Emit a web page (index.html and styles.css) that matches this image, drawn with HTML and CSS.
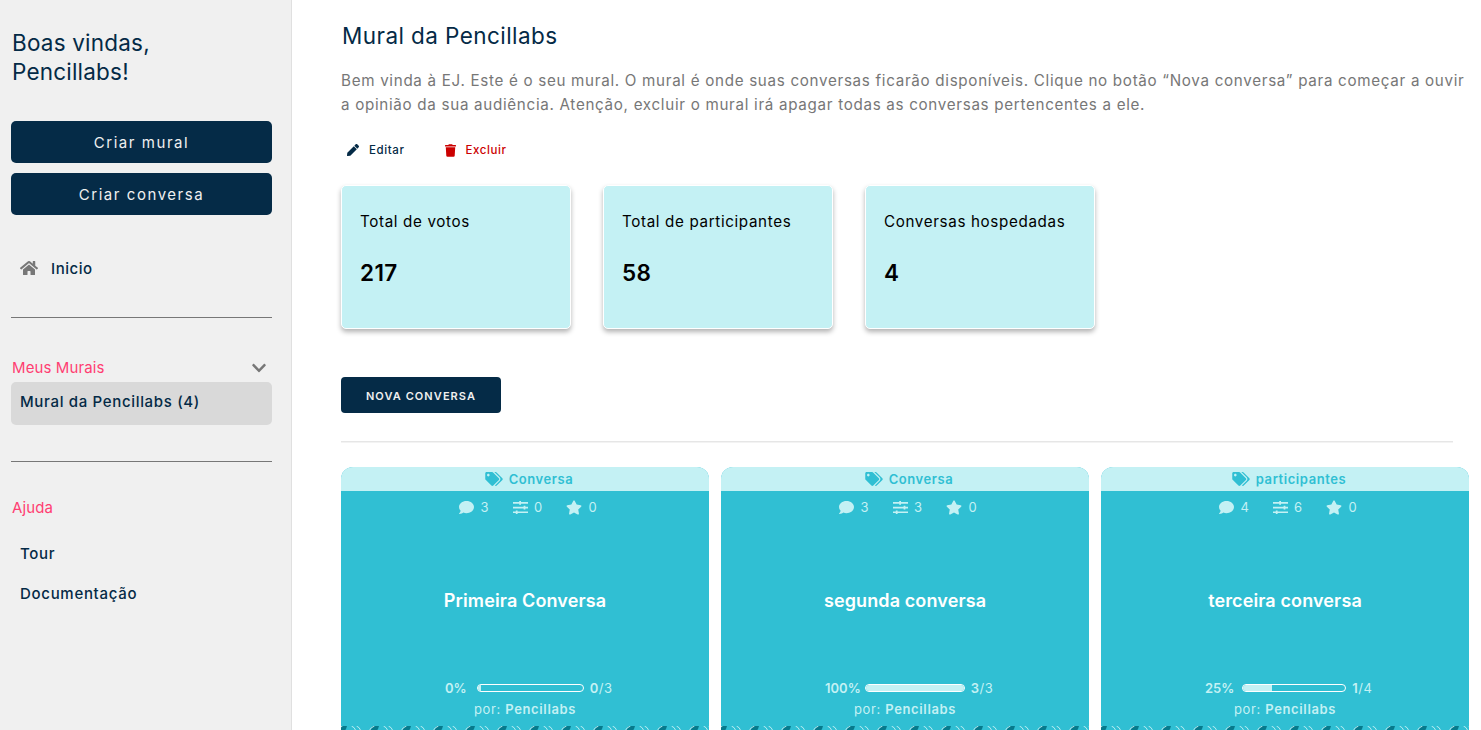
FILE: index.html
```html
<!DOCTYPE html>
<html lang="pt-BR">
<head>
<meta charset="utf-8">
<title>Mural da Pencillabs</title>
<link rel="stylesheet" href="styles.css">
</head>
<body>
<svg class="sprite" aria-hidden="true">
  <symbol id="home" viewBox="0 0 576 512"><path d="M280.37 148.26L96 300.11V464a16 16 0 0 0 16 16l112.06-.29a16 16 0 0 0 15.92-16V368a16 16 0 0 1 16-16h64a16 16 0 0 1 16 16v95.64a16 16 0 0 0 16 16.05L464 480a16 16 0 0 0 16-16V300L295.67 148.26a12.19 12.19 0 0 0-15.3 0zM571.6 251.47L488 182.56V44.05a12 12 0 0 0-12-12h-56a12 12 0 0 0-12 12v72.61L318.47 43a48 48 0 0 0-61 0L4.34 251.47a12 12 0 0 0-1.6 16.9l25.5 31A12 12 0 0 0 45.15 301l235.22-193.74a12.19 12.19 0 0 1 15.3 0L530.9 301a12 12 0 0 0 16.9-1.6l25.5-31a12 12 0 0 0-1.7-16.93z"/></symbol>
  <symbol id="chevron" viewBox="0 0 448 512"><path d="M207.029 381.476L12.686 187.132c-9.373-9.373-9.373-24.569 0-33.941l22.667-22.667c9.357-9.357 24.522-9.375 33.901-.04L224 284.505l154.745-154.021c9.379-9.335 24.544-9.317 33.901.04l22.667 22.667c9.373 9.373 9.373 24.569 0 33.941L240.971 381.476c-9.373 9.372-24.569 9.372-33.942 0z"/></symbol>
  <symbol id="pen" viewBox="0 0 512 512"><path d="M290.74 93.24l128.02 128.02-277.99 277.99-114.14 12.6C11.35 513.54-1.56 500.62.14 485.34l12.7-114.22 277.9-277.88zm207.2-19.06l-60.11-60.11c-18.75-18.75-49.16-18.75-67.91 0l-56.55 56.55 128.02 128.02 56.55-56.55c18.75-18.76 18.75-49.16 0-67.91z"/></symbol>
  <symbol id="trash" viewBox="0 0 448 512"><path d="M432 32H312l-9.4-18.7A24 24 0 0 0 281.1 0H166.8a23.72 23.72 0 0 0-21.4 13.3L136 32H16A16 16 0 0 0 0 48v32a16 16 0 0 0 16 16h416a16 16 0 0 0 16-16V48a16 16 0 0 0-16-16zM53.2 467a48 48 0 0 0 47.9 45h245.8a48 48 0 0 0 47.9-45L416 128H32z"/></symbol>
  <symbol id="tags" viewBox="0 0 640 512"><path d="M497.941 225.941L286.059 14.059A48 48 0 0 0 252.118 0H48C21.49 0 0 21.49 0 48v204.118a48 48 0 0 0 14.059 33.941l211.882 211.882c18.744 18.745 49.136 18.746 67.882 0l204.118-204.118c18.745-18.745 18.745-49.137 0-67.882zM112 160c-26.51 0-48-21.49-48-48s21.49-48 48-48 48 21.49 48 48-21.49 48-48 48zm513.941 133.823L421.823 497.941c-18.745 18.745-49.137 18.745-67.882 0l-.36-.36L527.64 323.522c16.999-16.999 26.36-39.6 26.36-63.64s-9.362-46.641-26.36-63.64L331.397 0h48.721a48 48 0 0 1 33.941 14.059l211.882 211.882c18.745 18.745 18.745 49.137 0 67.882z"/></symbol>
  <symbol id="comment" viewBox="0 0 512 512"><path d="M256 32C114.6 32 0 125.1 0 240c0 49.6 21.4 95 57 130.7C44.5 421.1 2.7 466 2.2 466.5c-2.2 2.3-2.8 5.7-1.5 8.7S4.8 480 8 480c66.3 0 116-31.8 140.6-51.4 32.7 12.3 69 19.4 107.4 19.4 141.4 0 256-93.1 256-208S397.4 32 256 32z"/></symbol>
  <symbol id="sliders" viewBox="0 0 15 15"><path d="M0 2h15v1.7H0zM0 6.7h15v1.7H0zM0 11.4h15v1.7H0zM6.2 1h1.8v3.7H6.2zM10.6 5.7h1.8v3.7h-1.8zM2.8 10.4h1.8v3.7H2.8z"/></symbol>
  <symbol id="star" viewBox="0 0 576 512"><path d="M259.3 17.8L194 150.2 47.9 171.5c-26.2 3.8-36.7 36.1-17.7 54.6l105.7 103-25 145.5c-4.5 26.3 23.2 46 46.4 33.7L288 439.6l130.7 68.7c23.2 12.2 50.9-7.4 46.4-33.7l-25-145.5 105.7-103c19-18.5 8.5-50.8-17.7-54.6L382 150.2 316.7 17.8c-11.7-23.6-45.6-23.9-57.4 0z"/></symbol>
  <pattern id="wave" width="32" height="22" patternUnits="userSpaceOnUse">
    <path class="wave-dark" d="M0 0H6Q5.5 3 3.5 5H0zM32 0v5h-3Q30 2 32 0z"/>
    <path class="wave-line" d="M28 5Q29.5 1.5 33.5 0M10.5 0Q13.5 1 15 5M15.5 0Q18.5 1 20 5M-4 5Q-2.5 1.5 1.5 0"/>
  </pattern>
</svg>
<div class="app">
  <aside class="side">
    <h2 class="welcome"><span>Boas vindas,</span><br><span>Pencillabs!</span></h2>
    <a class="side-btn"><span>Criar mural</span></a>
    <a class="side-btn"><span>Criar conversa</span></a>
    <a class="home"><svg class="i-home"><use href="#home"/></svg><span>Inicio</span></a>
    <div class="rule"></div>
    <div class="group"><span>Meus Murais</span><svg class="i-chevron"><use href="#chevron"/></svg></div>
    <a class="current"><span>Mural da Pencillabs (4)</span></a>
    <div class="rule"></div>
    <div class="help"><span>Ajuda</span></div>
    <a class="link"><span>Tour</span></a>
    <a class="link"><span>Documentação</span></a>
  </aside>
  <main class="main">
    <h1 class="title"><span>Mural da Pencillabs</span></h1>
    <p class="intro">Bem vinda à EJ. Este é o seu mural. O mural é onde suas conversas ficarão disponíveis. Clique no botão “Nova conversa” para começar a ouvir<br>a opinião da sua audiência. Atenção, excluir o mural irá apagar todas as conversas pertencentes a ele.</p>
    <div class="actions">
      <a class="edit"><svg class="i-pen"><use href="#pen"/></svg><span>Editar</span></a>
      <a class="delete"><svg class="i-trash"><use href="#trash"/></svg><span>Excluir</span></a>
    </div>
    <div class="totals">
      <div class="total"><span>Total de votos</span><strong>217</strong></div>
      <div class="total"><span>Total de participantes</span><strong>58</strong></div>
      <div class="total"><span>Conversas hospedadas</span><strong>4</strong></div>
    </div>
    <a class="new"><span>NOVA CONVERSA</span></a>
    <div class="divider"></div>
    <div class="cards">
      <article class="card">
        <div class="tag"><svg class="i-tags"><use href="#tags"/></svg><span>Conversa</span></div>
        <div class="stats"><svg class="i-stat"><use href="#comment"/></svg><span>3</span><svg class="i-stat"><use href="#sliders"/></svg><span>0</span><svg class="i-star"><use href="#star"/></svg><span>0</span></div>
        <h3 class="name">Primeira Conversa</h3>
        <div class="progress"><b>0%</b><div class="bar bar-0"><i style="width:3%"></i></div><span><b>0</b>/3</span></div>
        <div class="author"><span>por:</span> <b>Pencillabs</b></div>
        <svg class="waves"><rect width="100%" height="22" fill="url(#wave)"/></svg>
      </article>
      <article class="card">
        <div class="tag"><svg class="i-tags"><use href="#tags"/></svg><span>Conversa</span></div>
        <div class="stats"><svg class="i-stat"><use href="#comment"/></svg><span>3</span><svg class="i-stat"><use href="#sliders"/></svg><span>3</span><svg class="i-star"><use href="#star"/></svg><span>0</span></div>
        <h3 class="name">segunda conversa</h3>
        <div class="progress"><b>100%</b><div class="bar bar-100"><i style="width:100%"></i></div><span><b>3</b>/3</span></div>
        <div class="author"><span>por:</span> <b>Pencillabs</b></div>
        <svg class="waves"><rect width="100%" height="22" fill="url(#wave)"/></svg>
      </article>
      <article class="card">
        <div class="tag"><svg class="i-tags"><use href="#tags"/></svg><span>participantes</span></div>
        <div class="stats"><svg class="i-stat"><use href="#comment"/></svg><span>4</span><svg class="i-stat"><use href="#sliders"/></svg><span>6</span><svg class="i-star"><use href="#star"/></svg><span>0</span></div>
        <h3 class="name">terceira conversa</h3>
        <div class="progress"><b>25%</b><div class="bar bar-25"><i style="width:28%"></i></div><span><b>1</b>/4</span></div>
        <div class="author"><span>por:</span> <b>Pencillabs</b></div>
        <svg class="waves"><rect width="100%" height="22" fill="url(#wave)"/></svg>
      </article>
    </div>
  </main>
</div>
</body>
</html>
```
FILE: styles.css
```css
* { box-sizing: border-box; }
body { margin: 0; font-family: Inter, Roboto, sans-serif; color: #042a46; background: #fff; overflow: hidden; }
h1, h2, h3, p { margin: 0; font-weight: 400; }
svg { display: block; fill: currentColor; flex: none; }
.sprite { position: absolute; width: 0; height: 0; }
.app { display: flex; height: 730px; overflow: hidden; }
.side { width: 292px; flex: none; background: #f0f0f0; border-right: 1px solid #e0e0e0; padding: 28px 19px 0 11px; white-space: nowrap; }
.welcome { font-size: 22.5px; line-height: 29px; letter-spacing: .2px; margin-bottom: 35px; padding-left: 1px; }
.side-btn { display: flex; align-items: center; justify-content: center; height: 42px; margin-bottom: 10px; border-radius: 5px; background: #052b47; color: #f0f0f0; font-size: 15px; letter-spacing: 1.55px; }
.home { display: flex; align-items: center; gap: 13px; height: 24px; margin: 41px 0 37px; padding-left: 9px; font-size: 15px; font-weight: 500; letter-spacing: .55px; }
.i-home { width: 18px; height: 16px; color: #777; }
.rule { height: 1px; background: #777; }
.group { display: flex; align-items: center; justify-content: space-between; height: 24px; margin-top: 37px; padding: 0 5px 0 1px; font-size: 15px; letter-spacing: .1px; color: #ff3e72; }
.i-chevron { width: 16px; height: 16px; margin-top: 2px; color: #777; }
.current { display: block; height: 43px; line-height: 40px; margin: 3px 0 36px; padding-left: 9px; border-radius: 5px; background: #d9d9d9; font-size: 15px; font-weight: 500; letter-spacing: .67px; }
.help { font-size: 15px; line-height: 24px; margin: 34px 0 22px; padding-left: 1px; letter-spacing: .1px; color: #ff3e72; }
.link { display: block; height: 40px; line-height: 24px; padding-left: 9px; font-size: 15px; font-weight: 500; letter-spacing: .7px; }
.main { width: 1189px; padding: 20px 12px 0 49px; white-space: nowrap; }
.title { font-size: 22.5px; line-height: 32px; letter-spacing: .43px; margin-bottom: 17px; padding-left: 1px; }
.intro { font-size: 15.2px; line-height: 24px; letter-spacing: .69px; color: #777; }
.actions { display: flex; align-items: center; gap: 40px; height: 20px; margin: 23px 0 25px; padding-left: 6px; font-size: 11.5px; font-weight: 500; letter-spacing: .6px; }
.edit, .delete { display: flex; align-items: center; gap: 10px; }
.i-pen { width: 12px; height: 12px; }
.i-trash { width: 11px; height: 13px; }
.delete { color: #cb0000; }
.totals { display: flex; gap: 32px; }
.total { width: 230px; height: 144px; padding: 24px 18px; border: 1px solid #fff; border-radius: 5px; background: #c4f1f4; color: #000; box-shadow: 0 3px 5px rgba(0,0,0,.3); display: flex; flex-direction: column; }
.total span { font-size: 15.2px; line-height: 24px; letter-spacing: .64px; }
.total strong { font-size: 22.5px; line-height: 30px; margin-top: 24px; font-weight: 600; letter-spacing: .4px; }
.new { display: flex; align-items: center; justify-content: center; width: 160px; height: 36px; margin: 48px 0 28px; padding-top: 1px; border-radius: 4px; background: #052b47; color: #f0f0f0; font-size: 11px; font-weight: 600; letter-spacing: 1.08px; }
.divider { width: 1112px; height: 2px; border-top: 1px solid #e6e6e6; background: #f3f3f3; margin-bottom: 24px; }
.cards { display: flex; gap: 12px; }
.card { width: 368px; height: 281px; flex: none; border-radius: 12px 12px 0 0; overflow: hidden; background: #30bfd3; color: #c4f1f4; font-size: 13px; }
.tag { display: flex; align-items: center; justify-content: center; gap: 6px; height: 24px; padding-left: 8px; background: #c4f1f4; color: #30bfd3; font-weight: 600; letter-spacing: .57px; }
.i-tags { width: 18px; height: 14px; }
.stats { display: flex; align-items: center; height: 32px; padding-left: 118px; }
.stats span { width: 10px; margin: 0 22px 0 6.5px; }
.i-stat { width: 15px; height: 15px; }
.i-star { width: 16px; height: 15px; }
.name { margin-top: 63px; font-size: 18px; line-height: 30px; letter-spacing: .12px; font-weight: 600; color: #fff; text-align: center; }
.progress { display: flex; align-items: center; height: 20px; margin-top: 62px; padding-left: 104px; }
.progress span { letter-spacing: .5px; }
.progress b, .author b { font-weight: 600; }
.bar { height: 8px; border: 1px solid #fff; border-radius: 4px; overflow: hidden; }
.bar i { display: block; height: 100%; background: #c4f1f4; }
.bar-0 { width: 107px; margin: 0 6px 0 10px; }
.bar-100 { width: 100px; margin: 0 6px 0 4px; }
.bar-25 { width: 104px; margin: 0 6px 0 8px; }
.author { line-height: 20px; margin-top: 1px; text-align: center; letter-spacing: .65px; }
.waves { width: 368px; height: 22px; margin-top: 7px; }
.wave-dark { fill: #067a8c; }
.wave-line { fill: none; stroke: #c4f1f4; stroke-width: .9; }
```
